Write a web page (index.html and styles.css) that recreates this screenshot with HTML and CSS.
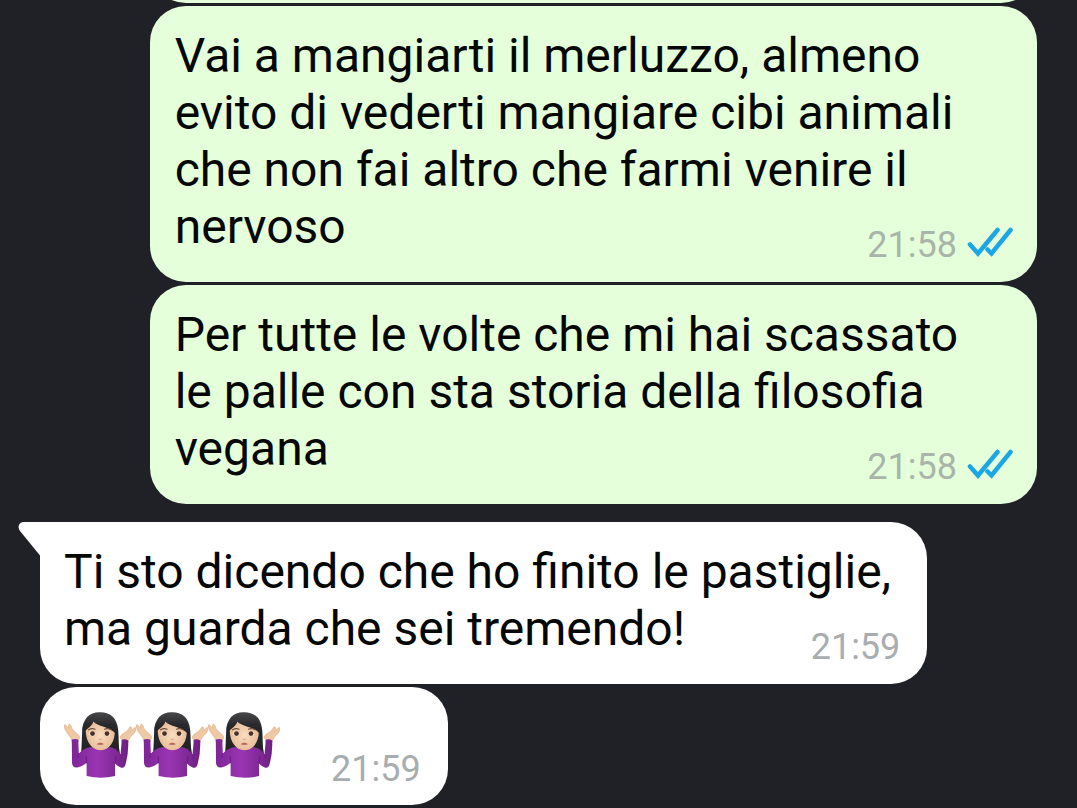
FILE: index.html
```html
<!DOCTYPE html>
<html lang="it">
<head>
    <meta charset="UTF-8">
    <meta name="viewport" content="width=device-width, initial-scale=1.0">
    <title>Chat</title>
    <link rel="stylesheet" href="styles.css">
</head>
<body>
    <!-- Shared shapes -->
    <svg class="sprite" aria-hidden="true">
        <defs>
            <linearGradient id="sweater" x1="0" y1="0" x2="1" y2="0">
                <stop offset="0" stop-color="#7d2596"/>
                <stop offset="0.45" stop-color="#9a35b3"/>
                <stop offset="1" stop-color="#6d2082"/>
            </linearGradient>
            <linearGradient id="hair" x1="0" y1="0" x2="0" y2="1">
                <stop offset="0" stop-color="#454446"/>
                <stop offset="0.4" stop-color="#29292c"/>
                <stop offset="1" stop-color="#202024"/>
            </linearGradient>
            <radialGradient id="skin" cx="0.5" cy="0.5" r="0.6">
                <stop offset="0" stop-color="#f9dcc0"/>
                <stop offset="1" stop-color="#e5b892"/>
            </radialGradient>
        </defs>
        <symbol id="checks" viewBox="0 0 46 30">
            <path d="M3 17.500 11 26.500 30.500 3M20.500 22.500 24.500 26.500 43.500 3" fill="none" stroke="#1da6e4" stroke-width="4.500" stroke-linecap="round"/>
        </symbol>
        <symbol id="shrug" viewBox="0 -1 72 71">
            <path d="M36 3.2C25 3 19 10 18.3 21 17.7 30 17.8 38 17 45L36 49 56 45C54.2 37 55 29 54.2 21 53 9 47 3.4 36 3.2Z" fill="url(#hair)"/>
            <path d="M8 33C7.800 28 3.500 25.500 1.700 21.500 .5 19.500-.5 16.200.7 15.800 2 15.200 3.200 18.500 4.300 19.200 4.200 17.500 4.300 15 5.800 15.200 7.200 15.600 7.300 19 9 21 11 23.200 15.400 26 15.800 28.500 15.800 30 14.200 29.500 14.300 33Z" fill="#efc9a6" stroke="#e3b58d" stroke-width="0.8"/>
            <path d="M64.200 33C64.500 28.500 69 26.300 71.200 22.500 72 21 72.500 18.800 71.700 18.600 70.300 18.500 68.500 21 67 21.500 67.500 19.500 67.800 17.600 66.600 17.700 65 17.900 64.600 20.600 63 22 61 23.600 56.500 25.500 56.200 28.500 56.300 30.300 57.800 29.500 57.800 33Z" fill="#efc9a6" stroke="#e3b58d" stroke-width="0.8"/>
            <path d="M7.8 30.5Q11 29.3 14.3 30.5L14.8 44.5Q20 39 26 38.2L46 38.2Q53 39.3 56.5 45.5L57.8 30.8Q61 29.5 64.2 31.5 64.8 43 61.8 54.5 60.4 59.7 57.3 58.7 54 58 51 54.5V67Q37 70.5 22.6 67V54Q18 57.7 13.5 58.5 8.6 59 8 54Z" fill="url(#sweater)"/>
            <path d="M22.6 54 22 47M51 54.5 52 47M14.8 44.5 13.3 49M56.5 45.5 57.5 49" fill="none" stroke="#6b1b82" stroke-width="1"/>
            <path d="M21.800 19C22 9 50.500 9 50.800 20 51.500 32 46 41 36.500 41.200 27 41 21 31 21.800 19Z" fill="url(#skin)"/>
            <path d="M19 24C22.500 20 27.500 18 29.500 12.500 33 17.500 46 17.500 51.500 24.500L53 32C56 18 50 6 36 5 22 6 17 16 19 24Z" fill="url(#hair)"/>
            <path d="M24.500 20.800Q28 18.800 31 20.200M40.500 20.200Q44 18.800 47 20.800" fill="none" stroke="#72513e" stroke-width="1.2" stroke-linecap="round"/>
            <ellipse cx="28.200" cy="24.800" rx="3" ry="2.500" fill="#f4e7dc"/>
            <ellipse cx="43.300" cy="24.800" rx="3" ry="2.500" fill="#f4e7dc"/>
            <circle cx="28.500" cy="24.600" r="2.400" fill="#4c3225"/>
            <circle cx="43" cy="24.600" r="2.400" fill="#4c3225"/>
            <path d="M34.8 30Q36.3 31 37.8 30" fill="none" stroke="#d7a281" stroke-width="1"/>
            <path d="M32.600 35.300Q36.300 31.500 40 35.300 36.300 36.800 32.600 35.300Z" fill="#b9695a"/>
        </symbol>
    </svg>

    <main class="chat">
        <div class="message sent previous"></div>

        <article class="message sent">
            <p class="text">
                Vai a mangiarti il merluzzo, almeno evito di vederti mangiare cibi animali che non fai altro che farmi venire il nervoso
                <span class="meta">
                    <time datetime="21:58">21:58</time>
                    <svg class="checks" role="img" aria-label="Letto"><use href="#checks"/></svg>
                </span>
            </p>
        </article>

        <article class="message sent">
            <p class="text">
                Per tutte le volte che mi hai scassato le palle con sta storia della filosofia vegana
                <span class="meta">
                    <time datetime="21:58">21:58</time>
                    <svg class="checks" role="img" aria-label="Letto"><use href="#checks"/></svg>
                </span>
            </p>
        </article>

        <article class="message received first">
            <svg class="tail" viewBox="0 0 23 34" aria-hidden="true">
                <path d="M23 0H6C1 0-1 5 2 9L22 33.500H23Z" fill="#fff"/>
            </svg>
            <p class="text">
                Ti sto dicendo che ho finito le pastiglie, ma guarda che sei tremendo!
                <span class="meta">
                    <time datetime="21:59">21:59</time>
                </span>
            </p>
        </article>

        <article class="message received short">
            <div class="emojis">
                <svg class="emoji" aria-hidden="true"><use href="#shrug"/></svg>
                <svg class="emoji" aria-hidden="true"><use href="#shrug"/></svg>
                <svg class="emoji" aria-hidden="true"><use href="#shrug"/></svg>
            </div>
            <span class="meta">
                <time datetime="21:59">21:59</time>
            </span>
        </article>
    </main>
</body>
</html>
```
FILE: styles.css
```css
body {
    margin: 0;
    background-color: #202127;
    color: #050705;
    font-family: Roboto, sans-serif;
}

.sprite {
    position: absolute;
    width: 0;
    height: 0;
}

/* newest messages stay at the bottom of the window */
.chat {
    box-sizing: border-box;
    height: 100vh;
    padding: 0 40px 3px;
    display: flex;
    flex-direction: column;
    justify-content: flex-end;
    gap: 3px;
    overflow: hidden;
}

.message {
    box-sizing: border-box;
    position: relative;
    flex-shrink: 0;
    width: fit-content;
    max-width: 89%;
    border-radius: 36px;
}

.sent {
    align-self: flex-end;
    padding: 21px 32px 19px 25px;
    background-color: #e5ffdb;
}

.received {
    align-self: flex-start;
    padding: 21px 27px 19px 24px;
    background-color: #fff;
}

.previous {
    width: 89%;
    min-height: 100px;
}

.first {
    margin-top: 15px;
    border-top-left-radius: 0;
}

.tail {
    position: absolute;
    top: 0;
    left: -22px;
    width: 23px;
    height: 34px;
}

.text {
    display: flow-root;
    margin: 0;
    font-size: 48px;
    line-height: 57px;
}

/* the time floats at the end of the last line, a little below it */
.meta {
    display: flex;
    align-items: flex-end;
    gap: 10px;
    color: #a9adb0;
    font-size: 36px;
    line-height: 36px;
}

.text .meta {
    float: right;
    margin-top: 29px;
}

.sent .meta {
    margin-right: -8px;
    color: #a9b5a9;
}

.checks {
    width: 46px;
    height: 30px;
    margin-bottom: 6px;
}

.short {
    display: flex;
    align-items: flex-end;
    gap: 51px;
    padding-bottom: 18px;
}

.emojis {
    display: flex;
    margin-bottom: 8px;
}

.emoji {
    width: 72px;
    height: 71px;
}
```
